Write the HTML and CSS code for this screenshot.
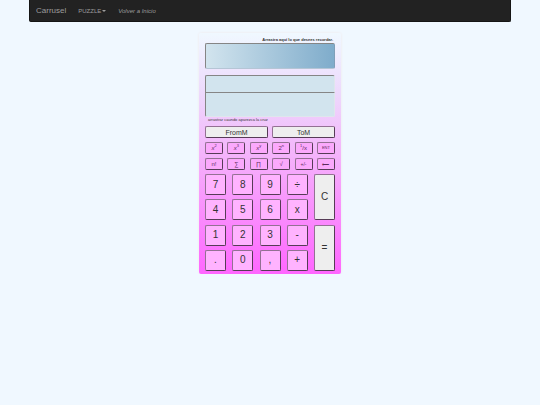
FILE: index.html
```html
<!DOCTYPE html>
<html lang="es">
<head>
  <meta charset="UTF-8">
  <meta name="viewport" content="width=device-width, initial-scale=1.0">
  <title>Calculadora</title>
  <link rel="stylesheet" href="styles.css">
</head>
<body>
  <nav class="navbar">
    <a class="brand" href="#">Carrusel</a>
    <a class="puzzle" href="#">PUZZLE<span class="caret"></span></a>
    <a class="volver" href="#">Volver a Inicio</a>
  </nav>

  <main class="calculadora">
    <label class="aviso" for="memoria">Arrastra aquí lo que desees recordar.</label>
    <input type="text" id="memoria" class="memoria">

    <!-- Pantalla -->
    <div class="pantalla">
      <input type="text" id="operacion" aria-label="Operación">
      <input type="text" id="resultado" aria-label="Resultado">
    </div>
    <p class="nota">arrastrar caundo aparezca la cruz</p>

    <div class="teclas-memoria">
      <button>FromM</button>
      <button>ToM</button>
    </div>

    <!-- Funciones -->
    <div class="funciones">
      <button><i>x</i><sup>2</sup></button>
      <button><i>x</i><sup>3</sup></button>
      <button><i>x</i><sup>y</sup></button>
      <button>2<sup>n</sup></button>
      <button><sup>1</sup>/x</button>
      <button class="ent">ENT</button>
      <button>n!</button>
      <button>∑</button>
      <button>∏</button>
      <button>√</button>
      <button class="signo">+/-</button>
      <button class="signo">⟵</button>
    </div>

    <!-- Teclado -->
    <div class="teclado">
      <button>7</button>
      <button>8</button>
      <button>9</button>
      <button>÷</button>
      <button class="alta">C</button>
      <button>4</button>
      <button>5</button>
      <button>6</button>
      <button>x</button>
      <button>1</button>
      <button>2</button>
      <button>3</button>
      <button>-</button>
      <button class="alta">=</button>
      <button>.</button>
      <button>0</button>
      <button>,</button>
      <button>+</button>
    </div>
  </main>
</body>
</html>
```
FILE: styles.css
```css
* {
  box-sizing: border-box;
}
body {
  margin: 0;
  font-family: "Liberation Sans", Arial, sans-serif;
  background: #f0f8ff;
  color: #333;
}
.navbar {
  display: flex;
  align-items: center;
  height: 22px;
  margin: 0 29px;
  padding: 0 6px;
  background: #222;
  border: 1px solid #151515;
  border-top: none;
  border-radius: 0 0 2px 2px;
}
.navbar a {
  color: #9d9d9d;
  font-size: 6px;
  text-decoration: none;
}
.navbar .brand {
  font-size: 8px;
}
.puzzle {
  margin: 0 12px;
}
.caret {
  display: inline-block;
  margin-left: 1px;
  vertical-align: middle;
  border-top: 2px solid #9d9d9d;
  border-left: 2px solid transparent;
  border-right: 2px solid transparent;
}
.navbar .volver {
  font-style: italic;
}
.calculadora {
  width: 142px;
  margin: 11px auto 0;
  padding: 4px 6px 3px;
  background: linear-gradient(#f0f8ff, #edd9fc 25%, #f4b4fb 50%, #ff66ff);
  border-radius: 2px;
  box-shadow: 0 0 3px #f0e8e8;
}
.aviso {
  display: block;
  margin-right: 2px;
  font-size: 4px;
  font-weight: bold;
  line-height: 6px;
  text-align: right;
}
input {
  display: block;
  width: 100%;
  padding: 0 3px;
  border: 1px solid;
  border-color: #858585 #dfe6ec #dfe6ec #858585;
  background: #d2e4ee;
  font-size: 8px;
}
.memoria {
  height: 26px;
  border-radius: 2px;
  border-color: #858585 #7f9fb8 #b5c5d5 #858585;
  background: linear-gradient(to right, #d2e4ee, #7faccb);
}
.pantalla {
  margin-top: 6px;
}
.pantalla input {
  height: 17px;
  border-bottom: none;
  border-radius: 2px 2px 0 0;
}
.pantalla input + input {
  height: 25px;
  border-bottom: 1px solid #dfe6ec;
  border-radius: 0 0 2px 2px;
}
.nota {
  margin: 0 0 3px 3px;
  font-size: 4px;
  line-height: 6px;
}
button {
  width: 100%;
  padding: 0;
  border: 1px solid;
  border-color: #937193 #563b56 #563b56 #937193;
  border-radius: 2px;
  background: #ffb3ff;
  color: #333;
  font-family: inherit;
  font-size: 10px;
  line-height: 1;
}
.teclas-memoria {
  display: flex;
  gap: 4px;
}
.teclas-memoria button {
  height: 12px;
  background: #eee;
  font-size: 7px;
}
.funciones {
  display: grid;
  grid-template-columns: repeat(6, 18px);
  grid-auto-rows: 12px;
  justify-content: space-between;
  gap: 4px 0;
  margin: 4px 0;
}
.funciones button {
  background: #fba9fc;
  color: #5c2c5c;
  font-size: 6px;
}
.funciones sup {
  font-size: 4px;
  line-height: 0;
}
.funciones .ent {
  font-size: 4px;
}
.funciones .signo {
  font-size: 5px;
}
.teclado {
  display: grid;
  grid-template-columns: repeat(5, 21px);
  grid-template-rows: repeat(4, 21px);
  justify-content: space-between;
  align-content: space-between;
  height: 97px;
}
.alta {
  grid-column: 5;
  grid-row: span 2;
  background: #eee;
}
```
